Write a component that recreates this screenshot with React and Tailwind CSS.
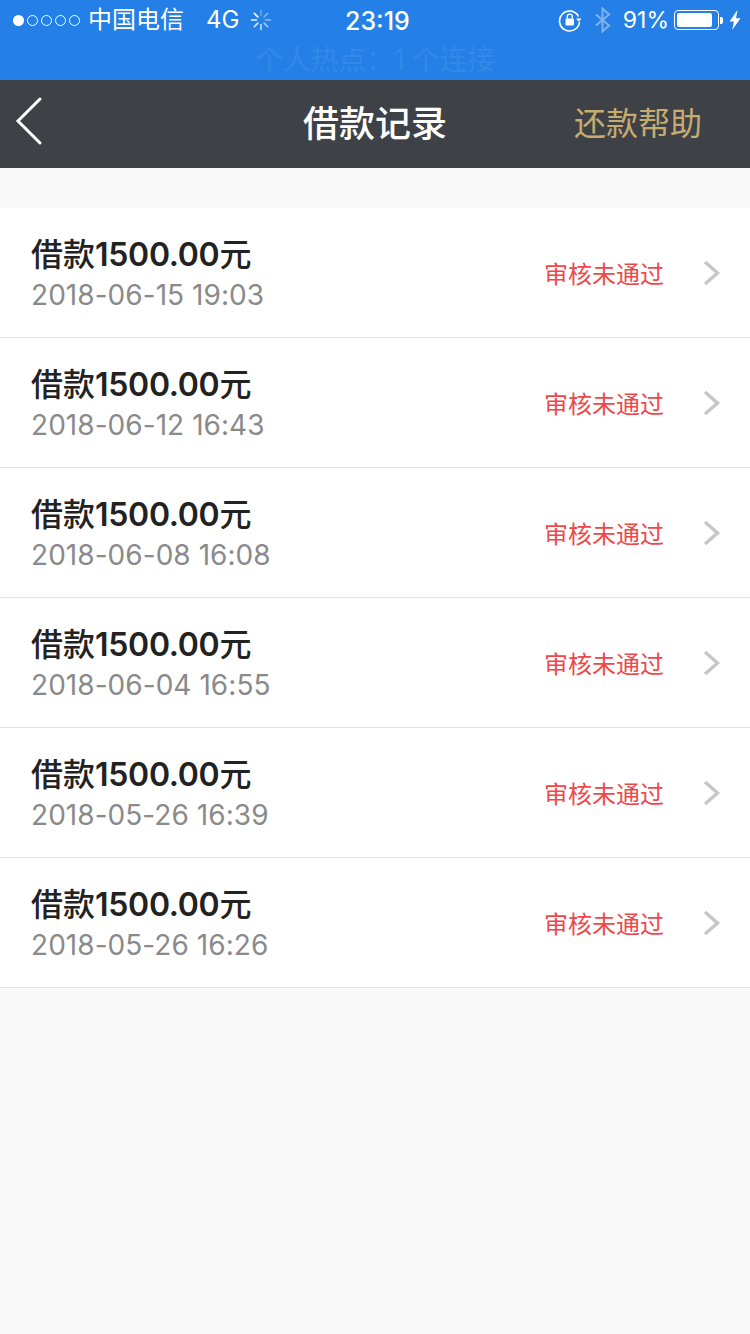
import React from 'react';

const FONT = 'font-["Inter","Noto_Sans_CJK_SC",sans-serif]';

const records = [
  { id: 1, amount: '1500.00', time: '2018-06-15 19:03' },
  { id: 2, amount: '1500.00', time: '2018-06-12 16:43' },
  { id: 3, amount: '1500.00', time: '2018-06-08 16:08' },
  { id: 4, amount: '1500.00', time: '2018-06-04 16:55' },
  { id: 5, amount: '1500.00', time: '2018-05-26 16:39' },
  { id: 6, amount: '1500.00', time: '2018-05-26 16:26' },
];

// activity spinner next to the network label
const Spinner = () => (
  <svg width="22" height="22" viewBox="0 0 22 22" stroke="#ffffff" strokeWidth="1.6" strokeLinecap="round">
    {[0, 45, 90, 135, 180, 225, 270, 315].map((deg, i) => (
      <line key={deg} x1="11" y1="1.5" x2="11" y2="6.5" transform={`rotate(${deg} 11 11)`} opacity={0.3 + i * 0.1} />
    ))}
  </svg>
);

const OrientationLock = () => (
  <svg width="24" height="24" viewBox="0 0 24 24" fill="none">
    <path d="M20.5 8.5A10 10 0 1 0 21.5 14" stroke="#ffffff" strokeWidth="1.6" />
    <path d="M18 10.5h5.5l-2.7 3.2z" fill="#ffffff" />
    <rect x="7.5" y="10.5" width="8.5" height="7" rx="1" fill="#ffffff" />
    <path d="M9.3 10.5V8.6a2.5 2.5 0 0 1 5 0v1.9" stroke="#ffffff" strokeWidth="1.4" />
  </svg>
);

const Bluetooth = () => (
  <svg width="18" height="26" viewBox="0 0 18 26" fill="none" stroke="#7fb2ee" strokeWidth="2">
    <path d="M2 7.5 15 18.5 8.5 24.5V1.5L15 7.5 2 18.5" />
  </svg>
);

const Battery = () => (
  <div className="flex items-center">
    <div className="w-[45px] h-[20px] rounded-[4px] border border-white p-[2px]">
      <div className="h-full w-[91%] rounded-[2px] bg-white" />
    </div>
    <div className="ml-[1px] w-[3px] h-[7px] rounded-r-[2px] bg-white" />
  </div>
);

const Bolt = () => (
  <svg width="12" height="22" viewBox="0 0 12 22" fill="#ffffff">
    <path d="M8.5 1 .5 12.5h4.4L3.2 21 11.5 9.2H7z" />
  </svg>
);

const RowChevron = () => (
  <svg width="18" height="26" viewBox="0 0 18 26" fill="none" stroke="#c6c6c6" strokeWidth="3.4">
    <path d="M2 2l12.5 11L2 24" />
  </svg>
);

const StatusBar = () => (
  <div className="relative h-[40px] flex items-center justify-between text-white text-[24px]">
    <div className="flex items-center pl-[13px]">
      <div className="flex items-center gap-[3px] mr-[8px]">
        <span className="w-[11px] h-[11px] rounded-full bg-white" />
        {[1, 2, 3, 4].map(n => (
          <span key={n} className="w-[11px] h-[11px] rounded-full border border-white" />
        ))}
      </div>
      <span>中国电信</span>
      <span className="ml-[22px]">4G</span>
      <span className="ml-[11px]"><Spinner /></span>
    </div>
    <span className="absolute left-[345px] top-[3px] text-[25px] font-medium">23:19</span>
    <div className="flex items-center pr-[9px]">
      <OrientationLock />
      <span className="ml-[12px]"><Bluetooth /></span>
      <span className="ml-[11px] text-[23px]">91%</span>
      <span className="ml-[5px]"><Battery /></span>
      <span className="ml-[6px]"><Bolt /></span>
    </div>
  </div>
);

const RecordRow = ({ record }) => (
  <div className="h-[130px] flex items-center justify-between pl-[31px] pr-[29px] bg-white border-b border-[#e3e3e3]">
    <div className="pt-[2px]">
      <div className="text-[32px] leading-[42px] font-medium text-[#222222]">
        借款<span className="font-semibold tracking-[-0.3px]">{record.amount}</span>元
      </div>
      <div className="text-[28px] leading-[38px] tracking-[0.05px] text-[#8a8a8a]">{record.time}</div>
    </div>
    <div className="flex items-center">
      <span className="mt-[5px] text-[24px] text-[#f0474b]">审核未通过</span>
      <span className="ml-[39px] flex"><RowChevron /></span>
    </div>
  </div>
);

export default function App() {
  return (
    <div className={`${FONT} w-[750px] h-[1334px] bg-[#f8f8f8] overflow-hidden`}>
      {/* system bar + personal hotspot strip */}
      <div className="bg-[#2480e6] h-[80px]">
        <StatusBar />
        <div className="h-[40px] flex items-center justify-center text-[28px] tracking-[-0.4px] text-[#3289e8]">
          个人热点：1 个连接
        </div>
      </div>

      {/* nav bar */}
      <div className="relative h-[88px] bg-[#3e4246] flex items-center justify-center">
        <svg className="absolute left-[14px] top-[16px]" width="30" height="52" viewBox="0 0 30 52" fill="none" stroke="#ffffff" strokeWidth="3" strokeLinecap="round">
          <path d="M26 3 4 25l22 22" />
        </svg>
        <span className="text-[36px] font-medium text-white">借款记录</span>
        <span className="absolute right-[48px] top-[22px] text-[32px] leading-[44px] text-[#c8ab70]">还款帮助</span>
      </div>

      <div className="mt-[40px]">
        {records.map(record => (
          <RecordRow key={record.id} record={record} />
        ))}
      </div>
    </div>
  );
}
